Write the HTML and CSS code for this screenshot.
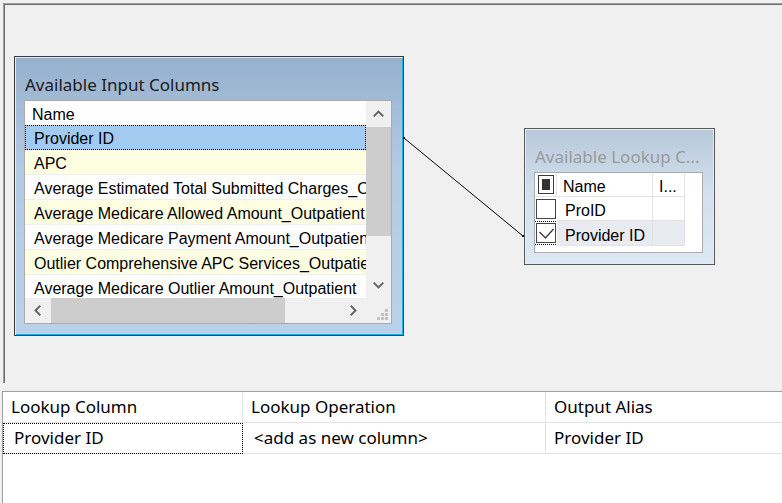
FILE: index.html
```html
<!DOCTYPE html>
<html>
<head>
<meta charset="utf-8">
<link rel="stylesheet" href="styles.css">
</head>
<body>
<div class="designer">
  <svg class="connector" width="778" height="376" viewBox="0 0 778 376">
    <line x1="400" y1="134" x2="519" y2="232" stroke="#000" stroke-width="1"/>
    <rect x="399" y="133" width="2" height="2" fill="#000"/>
    <rect x="518" y="231" width="2" height="2" fill="#000"/>
  </svg>

  <div class="panel input-panel">
    <div class="panel-title">Available Input Columns</div>
    <div class="listbox">
      <div class="rows">
        <div class="row head">Name</div>
        <div class="row sel">Provider ID</div>
        <div class="row alt">APC</div>
        <div class="row">Average Estimated Total Submitted Charges_Outpatient</div>
        <div class="row alt">Average Medicare Allowed Amount_Outpatient</div>
        <div class="row">Average Medicare Payment Amount_Outpatient</div>
        <div class="row alt">Outlier Comprehensive APC Services_Outpatient</div>
        <div class="row">Average Medicare Outlier Amount_Outpatient</div>
      </div>
      <div class="vscroll">
        <div class="sbtn">
          <svg width="11" height="7" viewBox="0 0 11 7"><polyline points="0.7,6.3 5.5,1.5 10.3,6.3" fill="none" stroke="#606060" stroke-width="1.9"/></svg>
        </div>
        <div class="vthumb"></div>
        <div class="sbtn">
          <svg width="11" height="7" viewBox="0 0 11 7"><polyline points="0.7,0.7 5.5,5.5 10.3,0.7" fill="none" stroke="#606060" stroke-width="1.9"/></svg>
        </div>
      </div>
      <div class="hscroll">
        <div class="sbtn">
          <svg width="7" height="11" viewBox="0 0 7 11"><polyline points="6.3,0.7 1.5,5.5 6.3,10.3" fill="none" stroke="#606060" stroke-width="1.9"/></svg>
        </div>
        <div class="hthumb"></div>
        <div class="sbtn">
          <svg width="7" height="11" viewBox="0 0 7 11"><polyline points="0.7,0.7 5.5,5.5 0.7,10.3" fill="none" stroke="#606060" stroke-width="1.9"/></svg>
        </div>
      </div>
      <div class="corner">
        <svg width="11" height="11" viewBox="0 0 11 11">
          <rect x="8" y="0" width="3" height="3" fill="#c2c2c2"/>
          <rect x="4" y="4" width="3" height="3" fill="#c2c2c2"/>
          <rect x="8" y="4" width="3" height="3" fill="#c2c2c2"/>
          <rect x="0" y="8" width="3" height="3" fill="#c2c2c2"/>
          <rect x="4" y="8" width="3" height="3" fill="#c2c2c2"/>
          <rect x="8" y="8" width="3" height="3" fill="#c2c2c2"/>
        </svg>
      </div>
    </div>
  </div>

  <div class="panel lookup-panel">
    <div class="panel-title dim">Available Lookup C...</div>
    <div class="lookbox">
      <div class="lcell lhead lcheck"><span class="hbox"><span class="hfill"></span></span></div>
      <div class="lcell lhead lname">Name</div>
      <div class="lcell lhead lname lshort">I...</div>
      <div class="lcell lcheck plain"><span class="cbox"></span></div>
      <div class="lcell lname">ProID</div>
      <div class="lcell lname"></div>
      <div class="lcell lcheck plain"><span class="cbox focus">
        <svg width="20" height="20" viewBox="0 0 20 20"><polyline points="3.5,9 9.5,15 17.5,6" fill="none" stroke="#444" stroke-width="1.5"/></svg>
      </span></div>
      <div class="lcell lname shade tall">Provider ID</div>
      <div class="lcell lname shade tall"></div>
    </div>
  </div>
</div>

<div class="mapgrid">
  <div class="gcell ghead">Lookup Column</div>
  <div class="gcell ghead">Lookup Operation</div>
  <div class="gcell ghead last">Output Alias</div>
  <div class="gcell gval focus">Provider ID</div>
  <div class="gcell gval">&lt;add as new column&gt;</div>
  <div class="gcell gval last alias">Provider ID</div>
</div>
</body>
</html>
```

FILE: styles.css
```css
html, body {
  margin: 0;
  padding: 0;
}

body {
  width: 782px;
  height: 503px;
  overflow: hidden;
  background: #f0f0f0;
  font-family: "Liberation Sans", Arial, sans-serif;
  color: #000;
}

/* ---------- designer canvas ---------- */
.designer {
  position: relative;
  box-sizing: border-box;
  margin: 3px 0 0 3px;
  height: 380px;
  border-top: 1px solid #a0a0a0;
  border-left: 1px solid #a0a0a0;
  box-shadow: inset 1px 1px 0 #6d6d6d;
  background: #f0f0f0;
}

.connector {
  position: absolute;
  left: 0;
  top: 0;
  pointer-events: none;
  z-index: 2;
}

.panel {
  position: absolute;
  box-sizing: border-box;
  display: flex;
  flex-direction: column;
  padding: 0 9px 9px 9px;
}

.input-panel {
  left: 10px;
  top: 52px;
  width: 390px;
  height: 280px;
  border: 1px solid #3a3a3a;
  box-shadow: inset 1px 1px 0 #e4ecf5, inset -1px -1px 0 #14b4ee;
  background: linear-gradient(to bottom, #95b0cd 0%, #b3cae3 40%, #bad1ea 100%);
}

.lookup-panel {
  left: 520px;
  top: 124px;
  width: 191px;
  height: 137px;
  border: 1px solid #595959;
  box-shadow: inset 1px 1px 0 #e6edf4, inset -1px -1px 0 #e6edf4;
  background: linear-gradient(to bottom, #b6c8da 0%, #d2dfec 45%, #dde8f3 100%);
}

.panel-title {
  flex: none;
  box-sizing: border-box;
  height: 43px;
  padding: 18px 0 0 1px;
  font-family: "Noto Sans", "Open Sans", sans-serif;
  font-size: 17px;
  line-height: 20px;
  color: #1a1a1a;
  white-space: nowrap;
  overflow: hidden;
}

.panel-title.dim {
  color: #9a9a9a;
}

/* ---------- input list box ---------- */
.listbox {
  flex: none;
  box-sizing: border-box;
  width: 368px;
  height: 224px;
  border: 1px solid #ababab;
  background: #fff;
  display: grid;
  grid-template-columns: 341px 25px;
  grid-template-rows: 197px 25px;
}

.rows {
  overflow: hidden;
  font-size: 16px;
}

.row {
  box-sizing: border-box;
  height: 25px;
  line-height: 28px;
  padding-left: 9px;
  white-space: nowrap;
  overflow: hidden;
  background: #fff;
  box-shadow: inset 0 -1px 0 #efefef;
}

.row.head {
  height: 24px;
  padding-left: 7px;
  box-shadow: none;
}

.row.alt {
  background: #fefee2;
}

.row.sel {
  background: #a3cbef;
  outline: 1px dotted #000;
  outline-offset: -1px;
  box-shadow: none;
}

.vscroll {
  background: #f0f0f0;
  display: flex;
  flex-direction: column;
}

.vscroll .sbtn {
  height: 25px;
}

.vthumb {
  margin-top: 1px;
  height: 109px;
  background: #cdcdcd;
}

.vscroll .vthumb + .sbtn {
  margin-top: auto;
}

.hscroll {
  background: #f0f0f0;
  display: flex;
}

.hscroll .sbtn {
  width: 25px;
}

.hthumb {
  margin-left: 1px;
  width: 234px;
  background: #cdcdcd;
}

.hscroll .hthumb + .sbtn {
  margin-left: auto;
}

.sbtn {
  flex: none;
  display: flex;
  align-items: center;
  justify-content: center;
}

.corner {
  background: #f0f0f0;
  display: flex;
  align-items: flex-end;
  justify-content: flex-end;
  padding: 0 3px 3px 0;
}

/* ---------- lookup list box ---------- */
.lookbox {
  flex: none;
  box-sizing: border-box;
  width: 169px;
  height: 81px;
  border: 1px solid #ababab;
  background: #fff;
  display: grid;
  grid-template-columns: 22px 96px 32px;
  grid-template-rows: 24px 24px 25px;
  align-content: start;
  font-size: 16px;
}

.lcell {
  box-sizing: border-box;
  border-right: 1px solid #e3e3e3;
  border-bottom: 1px solid #e3e3e3;
  line-height: 27px;
  white-space: nowrap;
  overflow: hidden;
}

.lcell.plain {
  border: none;
}

.lname {
  padding-left: 8px;
}

.lhead.lname {
  padding-left: 6px;
}

.lhead.lshort {
  padding-left: 6px;
}

.lcell.shade {
  background: #e8ecf0;
}

.lcell.tall {
  line-height: 29px;
}

.lcheck {
  position: relative;
}

.hbox {
  position: absolute;
  left: 3px;
  top: 2px;
  box-sizing: border-box;
  width: 16px;
  height: 19px;
  border: 1px solid #3a3a3a;
  background: #fff;
}

.hfill {
  position: absolute;
  left: 3px;
  top: 3px;
  width: 8px;
  height: 11px;
  background: #333;
}

.cbox {
  position: absolute;
  left: 1px;
  top: 2px;
  box-sizing: border-box;
  width: 20px;
  height: 20px;
  border: 1px solid #444;
  background: #fff;
}

.cbox svg {
  position: absolute;
  left: -1px;
  top: -1px;
}

.cbox.focus {
  top: 2px;
  outline: 1px dotted #000;
  outline-offset: 1px;
}

/* ---------- mapping grid ---------- */
.mapgrid {
  box-sizing: border-box;
  margin: 8px 0 0 2px;
  height: 112px;
  border-top: 1px solid #a0a0a0;
  border-left: 1px solid #a0a0a0;
  background: #fff;
  display: grid;
  grid-template-columns: 240px 303px 1fr;
  grid-template-rows: 31px 31px;
  align-content: start;
  font-family: "Noto Sans", "Open Sans", sans-serif;
  font-size: 17px;
}

.gcell {
  box-sizing: border-box;
  border-right: 1px solid #e3e3e3;
  border-bottom: 1px solid #e3e3e3;
  line-height: 30px;
  padding-left: 8px;
  white-space: nowrap;
  overflow: hidden;
}

.gcell.last {
  border-right: none;
}

.gval {
  padding-left: 11px;
}

.gval.alias {
  padding-left: 8px;
}

.gval.focus {
  outline: 1px dotted #000;
  outline-offset: -1px;
}
```
